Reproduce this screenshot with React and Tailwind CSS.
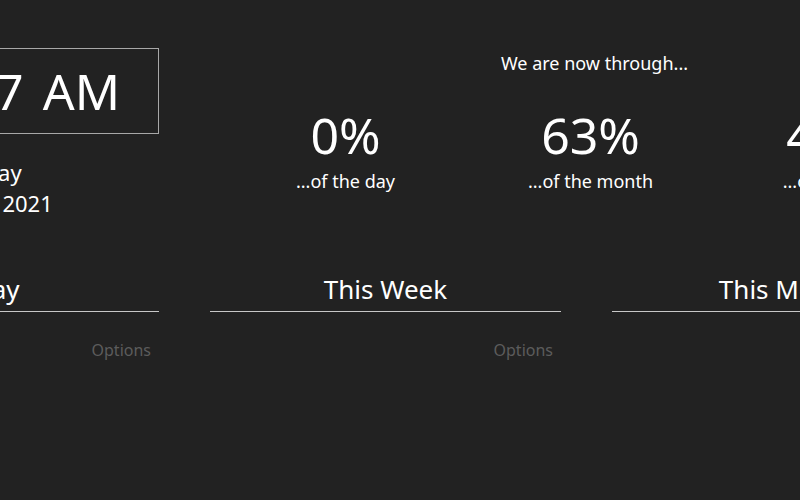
export default function App() {
  const stats = [
    { value: '0%', label: '...of the day' },
    { value: '63%', label: '...of the month' },
    { value: '47%', label: '...of the year' },
  ]
  const columns = ['Today', 'This Week', 'This Month']

  return (
    <div className="w-[800px] h-[500px] overflow-hidden bg-[#222222] text-white font-['Noto_Sans',sans-serif]">
      <div className="ml-[-192px] w-[1155px]">
        {/* top: clock + progress */}
        <div className="flex gap-[64px] pt-[48px]">
          <div className="w-[351px] shrink-0 flex flex-col items-center">
            <div className="w-full h-[86px] border border-[#a8a8a8] flex items-center justify-end pr-[38px] text-[50px] leading-none">
              <span>12:07</span>
              <span className="ml-[19px]">AM</span>
            </div>
            <div className="mt-[23px] text-[22px] leading-[31px] text-center">
              <div>Sunday</div>
              <div>June 20, 2021</div>
            </div>
          </div>
          <div className="w-[735px] shrink-0">
            <div className="text-center text-[18px] leading-[30px] pl-[8px]">We are now through...</div>
            <div className="grid grid-cols-3 mt-[29px]">
              {stats.map((s) => (
                <div key={s.label} className="flex flex-col items-center">
                  <div className="text-[50px] leading-[56px]">{s.value}</div>
                  <div className="text-[18px] leading-[28px] mt-[4px]">{s.label}</div>
                </div>
              ))}
            </div>
          </div>
        </div>

        {/* bottom: period columns */}
        <div className="grid grid-cols-[351px_351px_351px] gap-[51px] mt-[52px]">
          {columns.map((c) => (
            <div key={c} className="flex flex-col">
              <div className="text-center text-[26px] leading-[36px] pb-[4px] border-b border-[#c8c8c8]">{c}</div>
              <div className="text-right pr-[8px] mt-[26px] text-[16px] text-[#5c5c5c]">Options</div>
            </div>
          ))}
        </div>
      </div>
    </div>
  )
}
